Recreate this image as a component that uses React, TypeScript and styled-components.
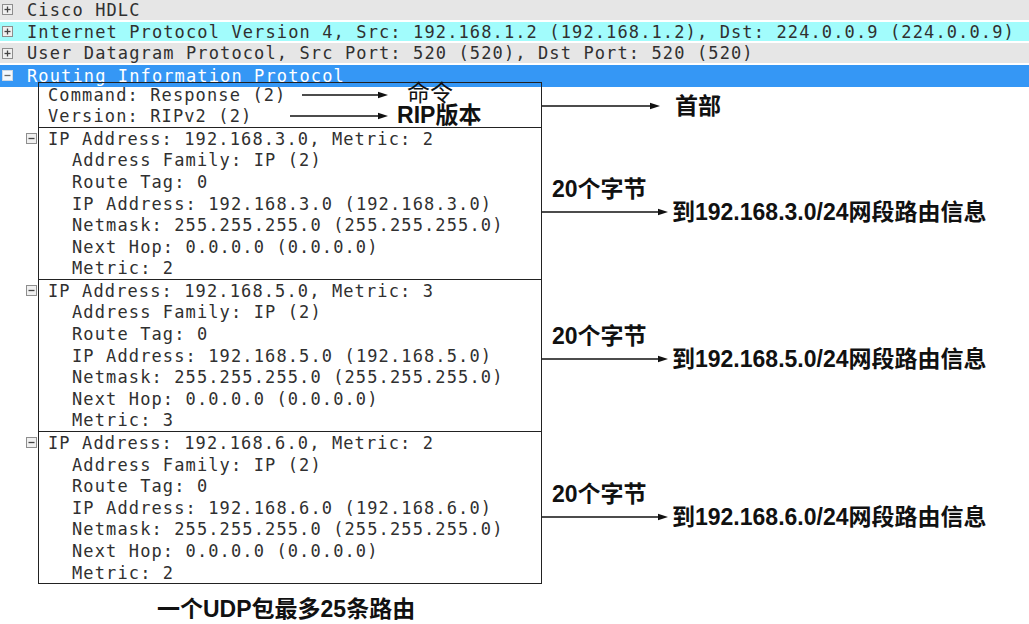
import React from "react";
import styled, { createGlobalStyle } from "styled-components";

const MONO = `"DejaVu Sans Mono", "Liberation Mono", monospace`;
const SANS = `"Liberation Sans", "Noto Sans CJK SC", sans-serif`;

const Global = createGlobalStyle`
  html, body { margin: 0; padding: 0; background: #fff; }
  body { width: 1029px; height: 624px; overflow: hidden; }
`;

const Page = styled.div`
  width: 1029px;
  height: 624px;
  display: flex;
  flex-direction: column;
  font-family: ${MONO};
  font-size: 17px;
  letter-spacing: 1.12px;
  color: #303030;
`;

const TopRow = styled.div<{ $bg: string; $fg?: string; $last?: boolean }>`
  height: 21.7px;
  box-sizing: border-box;
  border-bottom: ${(p) => (p.$last ? "0" : "2px solid #fff")};
  background: ${(p) => p.$bg};
  color: ${(p) => p.$fg || "#303030"};
  display: flex;
  align-items: center;
  white-space: nowrap;
  overflow: hidden;
`;

const ExpSlot = styled.span`
  width: 27px;
  flex: none;
  display: flex;
  align-items: center;
  padding-left: 2px;
  box-sizing: border-box;
`;

const ExpSvg = styled.svg`
  display: block;
  flex: none;
`;

const Expander = ({ open, light }: { open?: boolean; light?: boolean }) => (
  <ExpSvg width="11" height="11" viewBox="0 0 11 11">
    <rect
      x="0.5"
      y="0.5"
      width="10"
      height="10"
      fill={light ? "#f4f8fc" : "#f0f0f0"}
      stroke={light ? "#cfd8e2" : "#8e8e8e"}
    />
    <path d="M2.5 5.5h6" stroke={light ? "#6a6a6a" : "#444"} strokeWidth="1.3" />
    {!open && <path d="M5.5 2.5v6" stroke="#444" strokeWidth="1.3" />}
  </ExpSvg>
);

const Tree = styled.div`
  display: flex;
  flex-direction: column;
  margin-top: -5px;
`;

const Group = styled.div`
  display: grid;
  grid-template-columns: 38px 504px 1fr;
`;

const Gutter = styled.div`
  padding-left: 26px;
  padding-top: 6px;
`;

const Box = styled.div<{ $last?: boolean; $pad?: number }>`
  border: 1px solid #222;
  border-bottom: ${(p) => (p.$last ? "1px solid #222" : "0")};
  padding-top: ${(p) => p.$pad || 0}px;
  display: flex;
  flex-direction: column;
`;

const TreeRow = styled.div<{ $level: number }>`
  height: 21.6px;
  display: flex;
  align-items: center;
  white-space: nowrap;
  padding-left: ${(p) => (p.$level === 1 ? 9 : 33)}px;
`;

const Callout = styled.span<{ $gap: number }>`
  display: flex;
  align-items: center;
  margin-left: ${(p) => p.$gap}px;
  letter-spacing: 0;
`;

const CalloutText = styled.span<{ $gap: number; $bold?: boolean }>`
  font-family: ${SANS};
  font-size: 23px;
  line-height: 1;
  font-weight: ${(p) => (p.$bold ? 700 : 400)};
  color: #111;
  margin-left: ${(p) => p.$gap}px;
  transform: translateY(-1px);
  letter-spacing: 0;
`;

const Annot = styled.div<{ $pt: number }>`
  padding-top: ${(p) => p.$pt}px;
  display: flex;
  flex-direction: column;
  font-family: ${SANS};
  letter-spacing: 0;
  color: #111;
  font-weight: 700;
  white-space: nowrap;
`;

const Label = styled.div`
  font-size: 23px;
  line-height: 24px;
  height: 24px;
  margin-left: 10px;
`;

const ArrowRow = styled.div`
  display: flex;
  align-items: center;
  height: 22px;
`;

const ArrowText = styled.span<{ $gap: number }>`
  font-size: 23px;
  line-height: 22px;
  margin-left: ${(p) => p.$gap}px;
`;

const Caption = styled.div`
  font-family: ${SANS};
  font-weight: 700;
  font-size: 23px;
  line-height: 26px;
  letter-spacing: 0;
  color: #111;
  padding-left: 157px;
  margin-top: 12px;
  white-space: nowrap;
`;

const Arrow = ({ w }: { w: number }) => (
  <svg width={w} height="10" viewBox={`0 0 ${w} 10`} style={{ display: "block", flex: "none" }}>
    <line x1="0" y1="5" x2={w - 8} y2="5" stroke="#111" strokeWidth="1.3" />
    <path d={`M${w - 10} 1.8 L${w} 5 L${w - 10} 8.2 Z`} fill="#111" />
  </svg>
);

const routes = [
  { net: "3", metric: "2", pt: 50 },
  { net: "5", metric: "3", pt: 45 },
  { net: "6", metric: "2", pt: 51 },
];

export default function App() {
  return (
    <Page>
      <Global />
      <TopRow $bg="#e6e6e6">
        <ExpSlot>
          <Expander />
        </ExpSlot>
        Cisco HDLC
      </TopRow>
      <TopRow $bg="#a2fcfc">
        <ExpSlot>
          <Expander />
        </ExpSlot>
        Internet Protocol Version 4, Src: 192.168.1.2 (192.168.1.2), Dst: 224.0.0.9 (224.0.0.9)
      </TopRow>
      <TopRow $bg="#e6e6e6">
        <ExpSlot>
          <Expander />
        </ExpSlot>
        User Datagram Protocol, Src Port: 520 (520), Dst Port: 520 (520)
      </TopRow>
      <TopRow $bg="#3597f5" $fg="#fff" $last>
        <ExpSlot>
          <Expander open light />
        </ExpSlot>
        Routing Information Protocol
      </TopRow>

      <Tree>
        <Group>
          <div />
          <Box $pad={1}>
            <TreeRow $level={1}>
              Command: Response (2)
              <Callout $gap={15.6}>
                <Arrow w={86} />
                <CalloutText $gap={19}>命令</CalloutText>
              </Callout>
            </TreeRow>
            <TreeRow $level={1}>
              Version: RIPv2 (2)
              <Callout $gap={37.7}>
                <Arrow w={98} />
                <CalloutText $gap={9} $bold>
                  RIP版本
                </CalloutText>
              </Callout>
            </TreeRow>
          </Box>
          <Annot $pt={13}>
            <ArrowRow>
              <Arrow w={118} />
              <ArrowText $gap={15}>首部</ArrowText>
            </ArrowRow>
          </Annot>
        </Group>

        {routes.map((r, i) => (
          <Group key={r.net}>
            <Gutter>
              <Expander open />
            </Gutter>
            <Box $last={i === routes.length - 1}>
              <TreeRow $level={1}>
                IP Address: 192.168.{r.net}.0, Metric: {r.metric}
              </TreeRow>
              <TreeRow $level={2}>Address Family: IP (2)</TreeRow>
              <TreeRow $level={2}>Route Tag: 0</TreeRow>
              <TreeRow $level={2}>
                IP Address: 192.168.{r.net}.0 (192.168.{r.net}.0)
              </TreeRow>
              <TreeRow $level={2}>Netmask: 255.255.255.0 (255.255.255.0)</TreeRow>
              <TreeRow $level={2}>Next Hop: 0.0.0.0 (0.0.0.0)</TreeRow>
              <TreeRow $level={2}>Metric: {r.metric}</TreeRow>
            </Box>
            <Annot $pt={r.pt}>
              <Label>20个字节</Label>
              <ArrowRow>
                <Arrow w={126} />
                <ArrowText $gap={4}>到192.168.{r.net}.0/24网段路由信息</ArrowText>
              </ArrowRow>
            </Annot>
          </Group>
        ))}
      </Tree>

      <Caption>一个UDP包最多25条路由</Caption>
    </Page>
  );
}
